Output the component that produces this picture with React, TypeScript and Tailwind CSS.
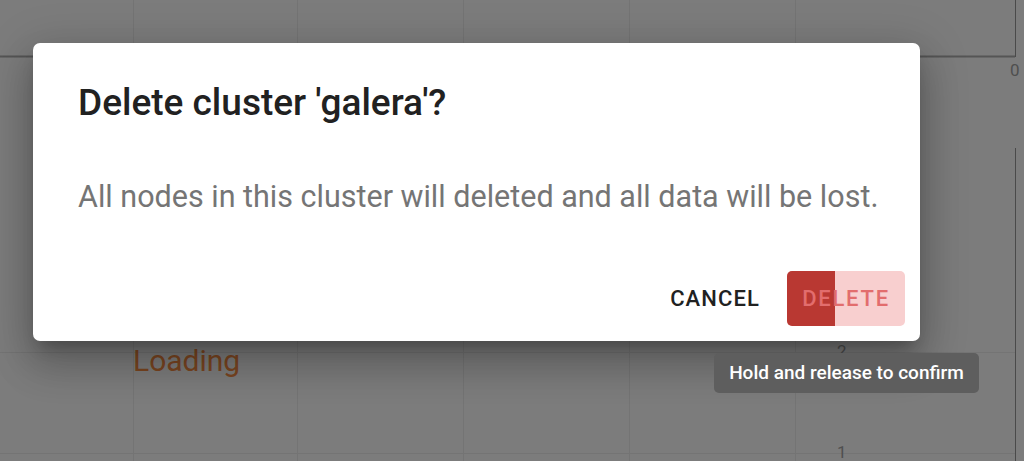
import React from "react";

const font = { fontFamily: "Roboto, 'Noto Sans', sans-serif" };

// chart behind the modal: grid, axis and its labels
const ChartBackdrop = () => (
  <svg className="absolute inset-0" width={1024} height={461} viewBox="0 0 1024 461" style={font}>
    {[133, 297, 463, 629, 795].map((x) => (
      <line key={x} x1={x + 0.5} y1={0} x2={x + 0.5} y2={461} stroke="#747474" strokeWidth={1} />
    ))}
    {[352, 453].map((y) => (
      <line key={y} x1={0} y1={y + 0.5} x2={1015} y2={y + 0.5} stroke="#747474" strokeWidth={1} />
    ))}
    <line x1={0} y1={56.5} x2={1015} y2={56.5} stroke="#555" strokeWidth={2} />
    <line x1={1015.5} y1={0} x2={1015.5} y2={57} stroke="#4a4a4a" strokeWidth={1} />
    <line x1={1015.5} y1={148} x2={1015.5} y2={461} stroke="#4a4a4a" strokeWidth={1} />
    <text x={1010} y={76} fontSize={17} fill="#4f4f4f">0</text>
    <text x={837} y={357} fontSize={17} fill="#4f4f4f">2</text>
    <text x={837} y={458} fontSize={17} fill="#4f4f4f">1</text>
    <text x={133} y={371} fontSize={30} fill="#7a4521">Loading</text>
  </svg>
);

export default function App() {
  return (
    <div className="relative w-[1024px] h-[461px] overflow-hidden bg-[#7c7c7c]" style={font}>
      <ChartBackdrop />

      {/* dialog */}
      <div className="absolute left-[33px] top-[43px] w-[887px] h-[298px] bg-white rounded-[7px] shadow-[0_11px_15px_-7px_rgba(0,0,0,0.25),0_24px_38px_3px_rgba(0,0,0,0.16),0_9px_46px_8px_rgba(0,0,0,0.14)] flex flex-col">
        <h2 className="pl-[45px] pt-[38px] text-[37px] leading-[44px] font-medium text-[#212121]">
          Delete cluster 'galera'?
        </h2>
        <p className="pl-[45px] mt-[54px] text-[30.5px] leading-[36px] text-[#757575]">
          All nodes in this cluster will deleted and all data will be lost.
        </p>
        <div className="mt-auto flex justify-end items-center gap-[14px] pr-[15px] pb-[15px]">
          <button className="h-[55px] px-[13px] text-[22px] font-medium tracking-[0.05em] text-[#212121]">
            CANCEL
          </button>
          <button className="relative h-[55px] w-[118px] rounded-[5px] overflow-hidden bg-[#f8cfcf]">
            <span className="absolute left-0 top-0 h-full w-[48px] bg-[#b93832]" />
            <span className="relative text-[22px] font-medium tracking-[0.08em] text-[#e26d6d]">DELETE</span>
          </button>
        </div>
      </div>

      {/* tooltip */}
      <div className="absolute left-[714px] top-[353px] w-[265px] h-[40px] rounded-[5px] bg-[#5e5e5e] flex items-center justify-center text-[19px] font-medium text-white">
        Hold and release to confirm
      </div>
    </div>
  );
}
